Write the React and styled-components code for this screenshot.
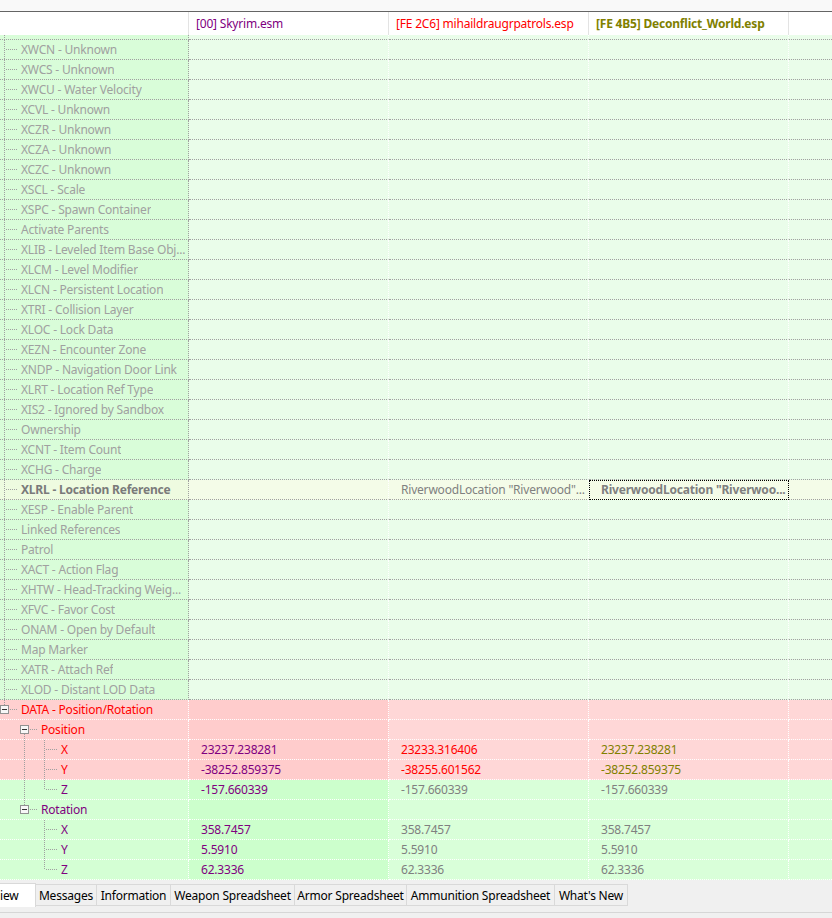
import React from 'react';
import styled, { createGlobalStyle } from 'styled-components';

const GlobalStyle = createGlobalStyle`
  html, body { margin: 0; padding: 0; background: #f0f0f0; }
  body { font-family: "Noto Sans", "Open Sans", sans-serif; font-size: 12px; letter-spacing: -0.2px; }
  #root { width: 832px; height: 918px; overflow: hidden; }
`;

const COLS = '189px 200px 200px 200px 1fr';

const TONES = {
  empty: { tree: '#d9fdd9', master: '#eafdea', other: '#eafdea', treeSep: '#a0a0a0', line: '#a0a0a0' },
  focus: { tree: '#eefbe0', master: '#f4fce8', other: '#f4fce8', treeSep: '#a0a0a0', line: '#a0a0a0' },
  conflict: { tree: '#ffd0d0', master: '#ffcccc', other: '#ffd7d7', treeSep: '#ffffff', line: '#ffffff' },
  match: { tree: '#d4ffd4', master: '#ccffcc', other: '#d9ffd9', treeSep: '#ffffff', line: '#ffffff' },
};

const Window = styled.div`
  width: 832px;
  height: 918px;
  display: flex;
  flex-direction: column;
  overflow: hidden;
  background: #ffffff;
`;

const TopStrip = styled.div`
  flex: none;
  height: 11px;
  background: #f9f9f9;
  border-bottom: 1px solid #646464;
`;

const Header = styled.div`
  flex: none;
  display: grid;
  grid-template-columns: ${COLS};
  height: 23px;
  background: #ffffff;
`;

const HeaderCell = styled.div`
  border-right: ${(p) => (p.$last ? 'none' : '1px solid #e3e3e3')};
  padding-left: 7px;
  padding-top: 1px;
  line-height: 22px;
  color: ${(p) => p.$color || '#000'};
  font-weight: ${(p) => (p.$bold ? 700 : 400)};
  white-space: nowrap;
  overflow: hidden;
`;

const Body = styled.div`
  flex: 1;
  display: flex;
  flex-direction: column;
  overflow: hidden;
`;

const Row = styled.div`
  flex: none;
  display: grid;
  grid-template-columns: ${COLS};
  height: ${(p) => p.$h || 20}px;
`;

const Cell = styled.div`
  box-sizing: border-box;
  height: 100%;
  background: ${(p) => p.$bg};
  border-bottom: 1px dotted ${(p) => p.$line};
  border-right: ${(p) => (p.$sep ? `1px dotted ${p.$sep}` : 'none')};
  overflow: hidden;
  white-space: nowrap;
`;

const TreeCell = styled(Cell)`
  display: flex;
  align-items: ${(p) => (p.$top ? 'flex-start' : 'center')};
`;

const ValueCell = styled(Cell)`
  padding-left: 12px;
  line-height: 19px;
  color: ${(p) => p.$color || '#808080'};
  font-weight: ${(p) => (p.$bold ? 700 : 400)};
  outline: ${(p) => (p.$focus ? '1px dotted #000' : 'none')};
  outline-offset: -1px;
`;

const Label = styled.span`
  padding-left: 1px;
  line-height: 19px;
  color: ${(p) => p.$color};
  font-weight: ${(p) => (p.$bold ? 700 : 400)};
  overflow: hidden;
`;

const GuideSvg = styled.svg`
  flex: none;
  display: block;
`;

function Guide({ up, down, stub, box }) {
  const c = '#a0a0a0';
  return (
    <GuideSvg width="20" height="19" viewBox="0 0 20 19" shapeRendering="crispEdges">
      {up && <line x1="4.5" y1="0" x2="4.5" y2={box ? 5 : 10} stroke={c} strokeDasharray="1 1" />}
      {down && <line x1="4.5" y1={box ? 14 : 0} x2="4.5" y2="19" stroke={c} strokeDasharray="1 1" />}
      {stub && <line x1={box ? 10 : 6} y1="9.5" x2="18" y2="9.5" stroke={c} strokeDasharray="1 1" />}
      {box && (
        <g>
          <rect x="0.5" y="5.5" width="8" height="8" fill="#f7f7f7" stroke="#919191" />
          <line x1="2" y1="9.5" x2="7" y2="9.5" stroke="#333" />
        </g>
      )}
    </GuideSvg>
  );
}

const TabBar = styled.div`
  flex: none;
  height: 38px;
  background: #f0f0f0;
  display: flex;
  flex-direction: column;
`;

const TabStrip = styled.div`
  display: flex;
  align-items: flex-start;
  height: 26px;
  padding-top: 4px;
  box-sizing: border-box;
`;

const Tab = styled.div`
  box-sizing: border-box;
  width: ${(p) => p.$w}px;
  height: ${(p) => (p.$active ? 24 : 22)}px;
  margin-top: ${(p) => (p.$active ? -1 : 0)}px;
  line-height: ${(p) => (p.$active ? 24 : 21)}px;
  text-align: ${(p) => (p.$active ? 'left' : 'center')};
  border: 1px solid #d9d9d9;
  border-left: none;
  border-bottom: ${(p) => (p.$active ? 'none' : '1px solid #d9d9d9')};
  background: ${(p) => (p.$active ? '#ffffff' : '#f0f0f0')};
  color: #000;
  white-space: nowrap;
  overflow: hidden;
`;

const TabFooter = styled.div`
  margin-top: 6px;
  height: 6px;
  border-top: 1px solid #d6d6d6;
`;

const upperLabels = [
  'XWCN - Unknown', 'XWCS - Unknown', 'XWCU - Water Velocity', 'XCVL - Unknown',
  'XCZR - Unknown', 'XCZA - Unknown', 'XCZC - Unknown', 'XSCL - Scale',
  'XSPC - Spawn Container', 'Activate Parents', 'XLIB - Leveled Item Base Obj...',
  'XLCM - Level Modifier', 'XLCN - Persistent Location', 'XTRI - Collision Layer',
  'XLOC - Lock Data', 'XEZN - Encounter Zone', 'XNDP - Navigation Door Link',
  'XLRT - Location Ref Type', 'XIS2 - Ignored by Sandbox', 'Ownership',
  'XCNT - Item Count', 'XCHG - Charge', 'XLRL - Location Reference',
  'XESP - Enable Parent', 'Linked References', 'Patrol', 'XACT - Action Flag',
  'XHTW - Head-Tracking Weig...', 'XFVC - Favor Cost', 'ONAM - Open by Default',
  'Map Marker', 'XATR - Attach Ref', 'XLOD - Distant LOD Data',
];

const PURPLE = '#800080';
const RED = '#ff0000';
const OLIVE = '#808000';

const L0 = [{ up: true, down: true, stub: true }];

const rows = [
  ...upperLabels.map((label) =>
    label.startsWith('XLRL')
      ? {
          label, tone: 'focus', guides: L0, color: '#7a7a7a', bold: true,
          values: [
            null,
            { text: 'RiverwoodLocation "Riverwood"...' },
            { text: 'RiverwoodLocation "Riverwoo...', bold: true, focus: true },
          ],
        }
      : { label, tone: 'empty', guides: L0, color: '#a0a0a0', values: [null, null, null] }
  ),
  { label: 'DATA - Position/Rotation', tone: 'conflict', color: RED, guides: [{ up: true, stub: true, box: true }], values: [null, null, null] },
  { label: 'Position', tone: 'conflict', color: RED, guides: [{}, { down: true, stub: true, box: true }], values: [null, null, null] },
  {
    label: 'X', tone: 'conflict', color: RED, guides: [{}, { up: true, down: true }, { up: true, down: true, stub: true }],
    values: [{ text: '23237.238281', color: PURPLE }, { text: '23233.316406', color: RED }, { text: '23237.238281', color: OLIVE }],
  },
  {
    label: 'Y', tone: 'conflict', color: RED, guides: [{}, { up: true, down: true }, { up: true, down: true, stub: true }],
    values: [{ text: '-38252.859375', color: PURPLE }, { text: '-38255.601562', color: RED }, { text: '-38252.859375', color: OLIVE }],
  },
  {
    label: 'Z', tone: 'match', color: PURPLE, guides: [{}, { up: true, down: true }, { up: true, stub: true }],
    values: [{ text: '-157.660339', color: PURPLE }, { text: '-157.660339' }, { text: '-157.660339' }],
  },
  { label: 'Rotation', tone: 'match', color: PURPLE, guides: [{}, { up: true, stub: true, box: true }], values: [null, null, null] },
  {
    label: 'X', tone: 'match', color: PURPLE, guides: [{}, {}, { up: true, down: true, stub: true }],
    values: [{ text: '358.7457', color: PURPLE }, { text: '358.7457' }, { text: '358.7457' }],
  },
  {
    label: 'Y', tone: 'match', color: PURPLE, guides: [{}, {}, { up: true, down: true, stub: true }],
    values: [{ text: '5.5910', color: PURPLE }, { text: '5.5910' }, { text: '5.5910' }],
  },
  {
    label: 'Z', tone: 'match', color: PURPLE, guides: [{}, {}, { up: true, stub: true }],
    values: [{ text: '62.3336', color: PURPLE }, { text: '62.3336' }, { text: '62.3336' }],
  },
];

const tabs = [
  { label: 'iew', w: 36, active: true },
  { label: 'Messages', w: 61 },
  { label: 'Information', w: 74 },
  { label: 'Weapon Spreadsheet', w: 124 },
  { label: 'Armor Spreadsheet', w: 112 },
  { label: 'Ammunition Spreadsheet', w: 148 },
  { label: "What's New", w: 73 },
];

function RecordRow({ row }) {
  const t = TONES[row.tone];
  return (
    <Row>
      <TreeCell $bg={t.tree} $line={t.line} $sep={t.treeSep}>
        {row.guides.map((g, i) => (
          <Guide key={i} {...g} />
        ))}
        <Label $color={row.color} $bold={row.bold}>{row.label}</Label>
      </TreeCell>
      {row.values.map((v, i) => (
        <ValueCell
          key={i}
          $bg={i === 0 ? t.master : t.other}
          $line={t.line}
          $sep="#ffffff"
          $color={v && v.color}
          $bold={v && v.bold}
          $focus={v && v.focus}
        >
          {v ? v.text : ''}
        </ValueCell>
      ))}
      <Cell $bg={t.other} $line={t.line} />
    </Row>
  );
}

export default function App() {
  const t = TONES.empty;
  return (
    <>
      <GlobalStyle />
      <Window>
        <TopStrip />
        <Header>
          <HeaderCell />
          <HeaderCell $color={PURPLE}>[00] Skyrim.esm</HeaderCell>
          <HeaderCell $color={RED}>[FE 2C6] mihaildraugrpatrols.esp</HeaderCell>
          <HeaderCell $color={OLIVE} $bold>[FE 4B5] Deconflict_World.esp</HeaderCell>
          <HeaderCell $last />
        </Header>
        <Body>
          <Row $h={5}>
            <TreeCell $bg={t.tree} $line={t.line} $sep={t.treeSep} $top>
              <Guide up down />
            </TreeCell>
            <Cell $bg={t.master} $line={t.line} $sep="#ffffff" />
            <Cell $bg={t.other} $line={t.line} $sep="#ffffff" />
            <Cell $bg={t.other} $line={t.line} $sep="#ffffff" />
            <Cell $bg={t.other} $line={t.line} />
          </Row>
          {rows.map((r, i) => (
            <RecordRow key={i} row={r} />
          ))}
        </Body>
        <TabBar>
          <TabStrip>
            {tabs.map((tb) => (
              <Tab key={tb.label} $w={tb.w} $active={tb.active}>
                {tb.label}
              </Tab>
            ))}
          </TabStrip>
          <TabFooter />
        </TabBar>
      </Window>
    </>
  );
}
